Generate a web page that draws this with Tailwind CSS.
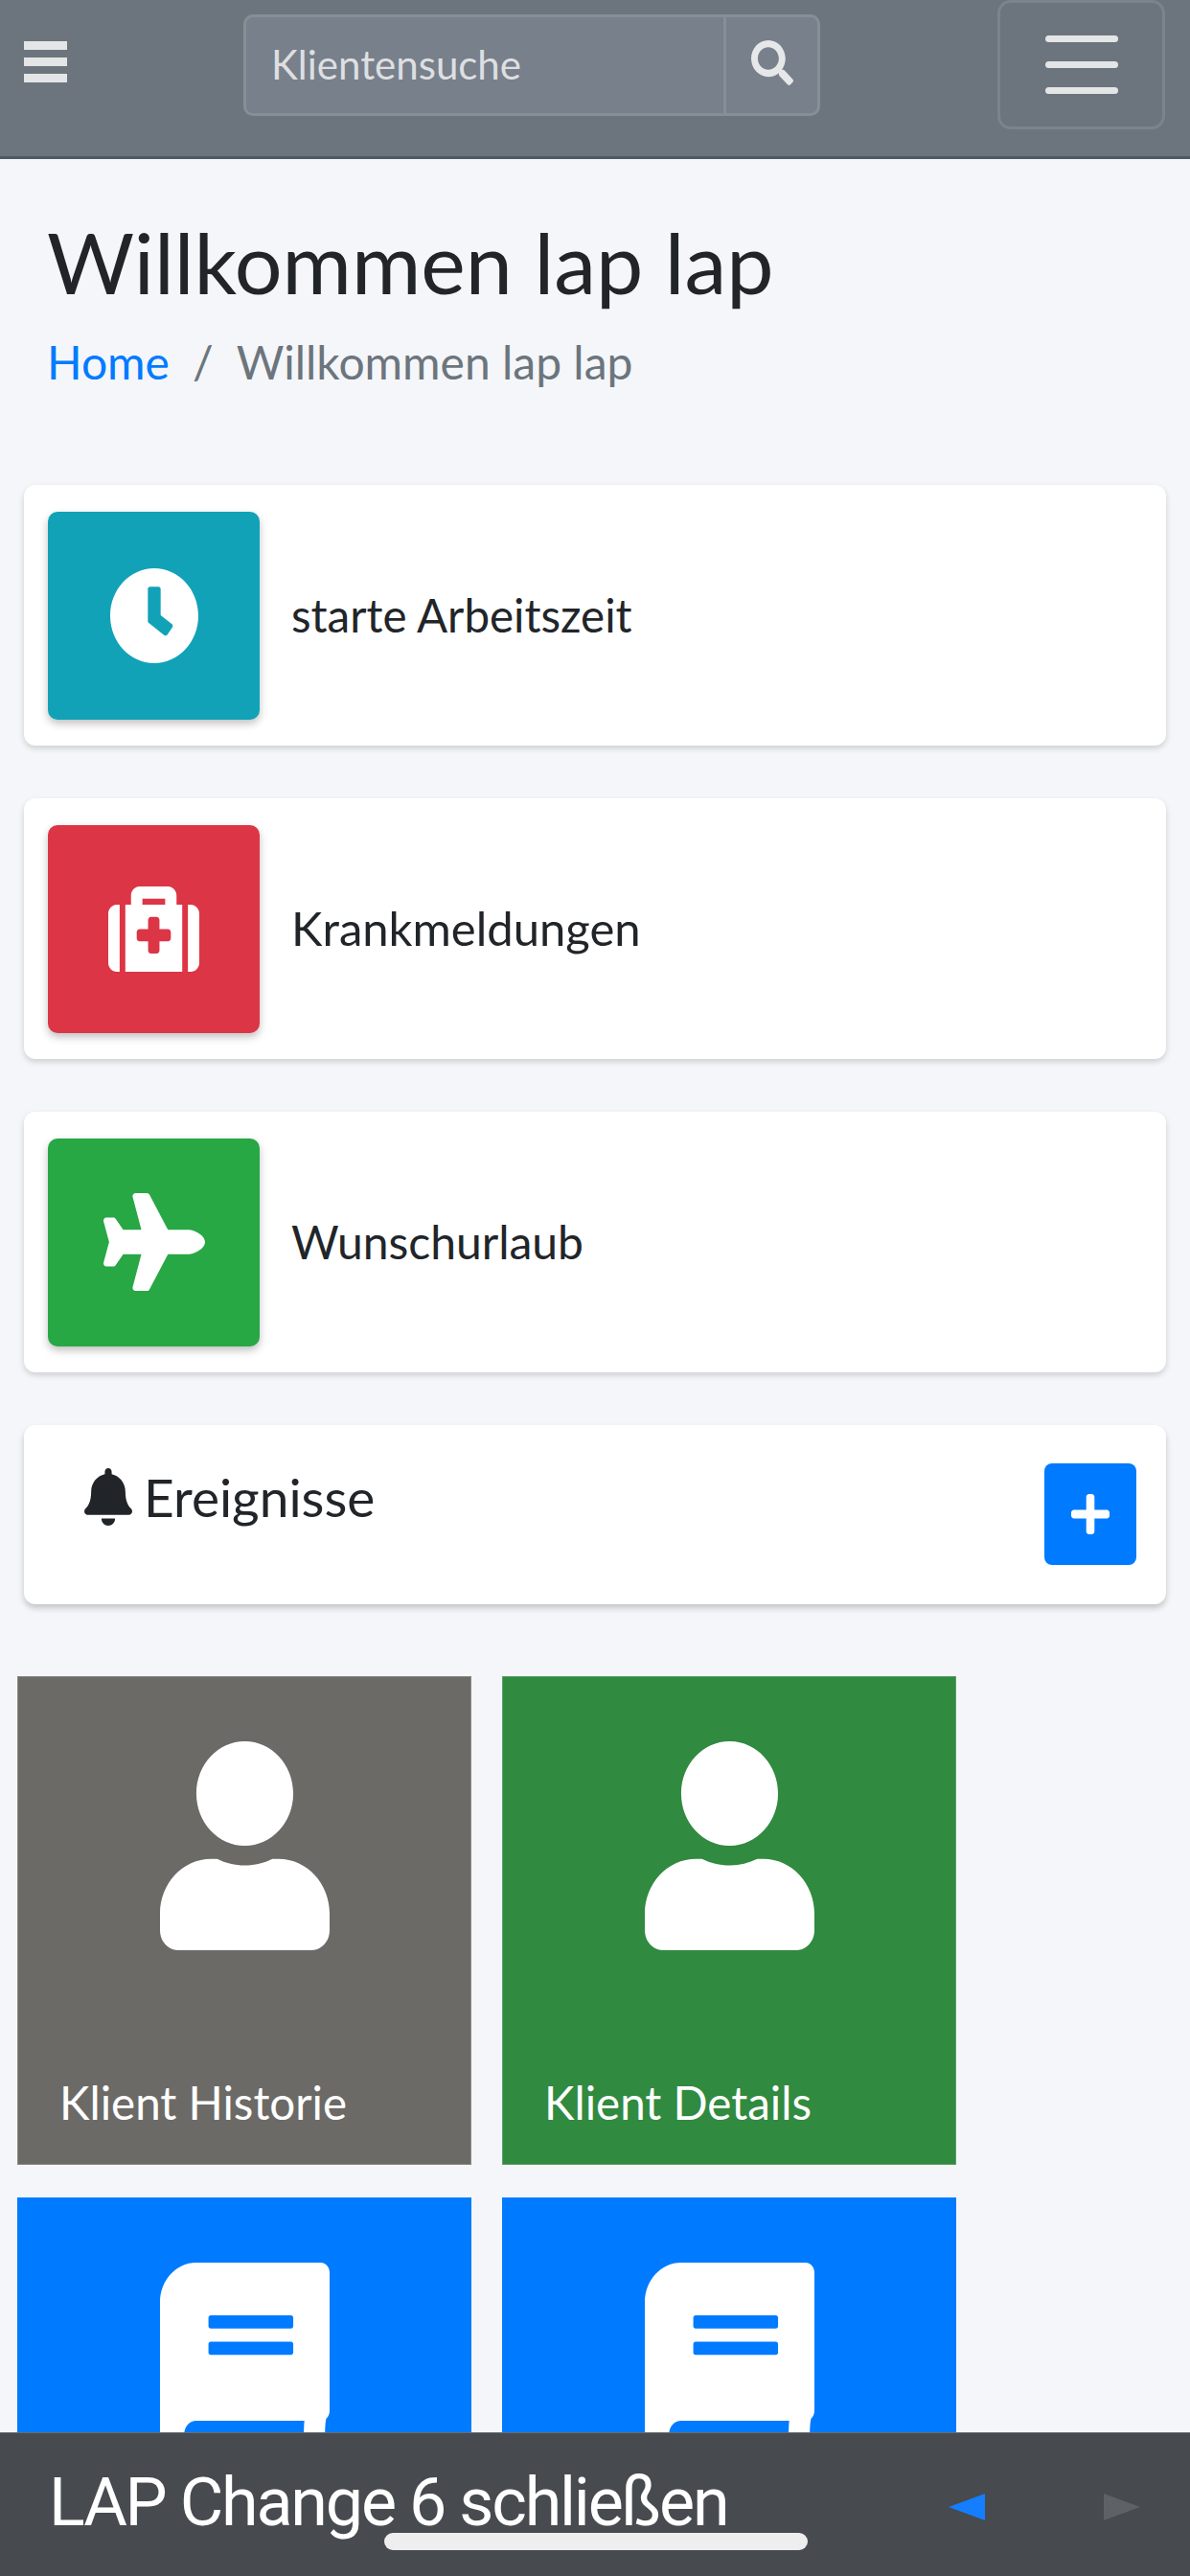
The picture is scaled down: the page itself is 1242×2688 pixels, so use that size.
<!DOCTYPE html>
<html lang="de">
<head>
  <meta charset="UTF-8" />
  <meta name="viewport" content="width=device-width, initial-scale=1.0" />
  <title>Willkommen lap lap</title>
  <script src="https://cdn.jsdelivr.net/npm/@tailwindcss/browser@4"></script>
</head>
<body class="relative h-[2688px] w-[1242px] overflow-hidden bg-[#f4f6f9] font-['Lato',sans-serif] text-[#212529]">

  <!-- top navbar -->
  <header class="flex h-[166px] items-start border-b-[3px] border-[#4f5962] bg-[#6c757d]">
    <div class="ml-[25px] mt-[43px] flex w-[45px] flex-col gap-[8px]">
      <div class="h-[9px] bg-[#e4e5e6]"></div>
      <div class="h-[9px] bg-[#e4e5e6]"></div>
      <div class="h-[9px] bg-[#e4e5e6]"></div>
    </div>
    <div class="ml-[184px] mt-[15px] flex h-[106px] w-[602px] rounded-[10px] border-[3px] border-[#868e96] bg-[#78808b]">
      <div class="flex flex-1 items-center pl-[26px] pb-[2px] text-[42px] text-white/75">Klientensuche</div>
      <div class="flex w-[98px] items-start justify-center border-l-[3px] border-[#868e96] pt-[24px]">
        <svg class="h-[47px] w-[44px] fill-[#e6e7e9]" viewBox="0 0 512 512" preserveAspectRatio="none"><path d="M505 442.7L405.3 343c-4.5-4.5-10.6-7-17-7H372c27.6-35.3 44-79.7 44-128C416 93.1 322.9 0 208 0S0 93.1 0 208s93.1 208 208 208c48.3 0 92.7-16.4 128-44v16.3c0 6.4 2.5 12.5 7 17l99.7 99.7c9.4 9.4 24.6 9.4 33.9 0l28.3-28.3c9.4-9.4 9.4-24.6.1-34zM208 336c-70.7 0-128-57.2-128-128 0-70.7 57.2-128 128-128 70.7 0 128 57.2 128 128 0 70.7-57.2 128-128 128z"/></svg>
      </div>
    </div>
    <div class="ml-[185px] flex h-[135px] w-[175px] flex-col items-center gap-[20px] rounded-[14px] border-[3px] border-[#7b838c] pt-[34px]">
      <div class="h-[7px] w-[76px] rounded-full bg-[#e4e5e6]"></div>
      <div class="h-[7px] w-[76px] rounded-full bg-[#e4e5e6]"></div>
      <div class="h-[7px] w-[76px] rounded-full bg-[#e4e5e6]"></div>
    </div>
  </header>

  <!-- page title -->
  <section class="pl-[49px] pt-[54px]">
    <h1 class="text-[88px] leading-[106px]">Willkommen lap lap</h1>
    <nav class="mt-[20px] flex items-center text-[48px] leading-[64px]">
      <a class="text-[#007bff]">Home</a>
      <span class="mx-[24px] text-[#6c757d]">/</span>
      <span class="text-[#6c757d]">Willkommen lap lap</span>
    </nav>
  </section>

  <!-- info boxes -->
  <section class="mx-[25px] mt-[96px] flex flex-col gap-[55px]">
    <div class="flex h-[272px] items-center rounded-[12px] bg-white pl-[25px] shadow-[0_3px_6px_rgba(0,0,0,0.16)]">
      <div class="flex h-[217px] w-[221px] items-center justify-center rounded-[10px] bg-[#11a2b8] shadow-[0_4px_8px_rgba(0,0,0,0.25)]">
        <svg class="h-[99px] w-[92px] fill-white" viewBox="8 8 496 496" preserveAspectRatio="none"><path d="M256 8C119 8 8 119 8 256s111 248 248 248 248-111 248-248S393 8 256 8zm57.1 350.1L224.9 294c-3.1-2.3-4.9-5.9-4.9-9.7V116c0-6.6 5.4-12 12-12h48c6.6 0 12 5.4 12 12v137.7l63.5 46.2c5.4 3.9 6.5 11.4 2.6 16.8l-28.2 38.8c-3.9 5.3-11.4 6.5-16.8 2.6z"/></svg>
      </div>
      <div class="ml-[33px] text-[47.5px]">starte Arbeitszeit</div>
    </div>
    <div class="flex h-[272px] items-center rounded-[12px] bg-white pl-[25px] shadow-[0_3px_6px_rgba(0,0,0,0.16)]">
      <div class="flex h-[217px] w-[221px] items-center justify-center rounded-[10px] bg-[#dc3545] shadow-[0_4px_8px_rgba(0,0,0,0.25)]">
        <svg class="h-[89px] w-[95px] fill-white" viewBox="0 32 512 448" preserveAspectRatio="none"><path d="M96 480h320V128h-32V80c0-26.51-21.49-48-48-48H176c-26.51 0-48 21.49-48 48v48H96v352zm96-384h128v32H192V96zm320 80v256c0 26.51-21.49 48-48 48h-16V128h16c26.51 0 48 21.49 48 48zM64 480H48c-26.51 0-48-21.49-48-48V176c0-26.51 21.49-48 48-48h16v352zm288-208v32c0 8.837-7.163 16-16 16h-48v48c0 8.837-7.163 16-16 16h-32c-8.837 0-16-7.163-16-16v-48h-48c-8.837 0-16-7.163-16-16v-32c0-8.837 7.163-16 16-16h48v-48c0-8.837 7.163-16 16-16h32c8.837 0 16 7.163 16 16v48h48c8.837 0 16 7.163 16 16z"/></svg>
      </div>
      <div class="ml-[33px] text-[49px]">Krankmeldungen</div>
    </div>
    <div class="flex h-[272px] items-center rounded-[12px] bg-white pl-[25px] shadow-[0_3px_6px_rgba(0,0,0,0.16)]">
      <div class="flex h-[217px] w-[221px] items-center justify-center rounded-[10px] bg-[#28a745] shadow-[0_4px_8px_rgba(0,0,0,0.25)]">
        <svg class="h-[102px] w-[106px] fill-white" viewBox="0 0 576 512" preserveAspectRatio="none"><path d="M480 192H365.71L260.61 8.06A16.014 16.014 0 0 0 246.71 0h-65.5c-10.63 0-18.3 10.17-15.38 20.39L214.86 192H112l-43.2-57.6c-3.02-4.03-7.77-6.4-12.8-6.4H16.01C5.6 128-2.04 137.78.49 147.88L32 256 .49 364.12C-2.04 374.22 5.6 384 16.01 384H56c5.04 0 9.78-2.37 12.8-6.4L112 320h102.86l-49.03 171.6c-2.92 10.22 4.75 20.4 15.38 20.4h65.5c5.74 0 11.04-3.08 13.89-8.06L365.71 320H480c35.35 0 96-28.65 96-64s-60.65-64-96-64z"/></svg>
      </div>
      <div class="ml-[33px] text-[48px]">Wunschurlaub</div>
    </div>
  </section>

  <!-- events -->
  <section class="mx-[25px] mt-[55px] flex h-[187px] items-start rounded-[12px] bg-white pl-[63px] pr-[31px] shadow-[0_4px_6px_rgba(0,0,0,0.2)]">
    <svg class="mt-[45px] h-[60px] w-[50px] fill-[#212529]" viewBox="0 0 448 512" preserveAspectRatio="none"><path d="M224 512c35.32 0 63.97-28.65 63.97-64H160.03c0 35.35 28.65 64 63.97 64zm215.39-149.71c-19.32-20.76-55.47-51.99-55.47-154.29 0-77.7-54.48-139.9-127.94-155.16V32c0-17.67-14.32-32-31.98-32s-31.98 14.33-31.98 32v20.84C118.56 68.1 64.08 130.3 64.08 208c0 102.3-36.15 133.53-55.47 154.29-6 6.45-8.66 14.16-8.61 21.71.11 16.4 12.98 32 32.1 32h383.8c19.12 0 32-15.6 32.1-32 .05-7.55-2.61-15.27-8.61-21.71z"/></svg>
    <div class="ml-[12px] mt-[40px] flex-1 text-[55px] leading-[70px]">Ereignisse</div>
    <button class="mt-[40px] flex h-[106px] w-[96px] items-center justify-center rounded-[8px] bg-[#007bff]">
      <svg class="h-[42px] w-[40px] fill-white" viewBox="0 32 448 448" preserveAspectRatio="none"><path d="M416 208H272V64c0-17.67-14.33-32-32-32h-32c-17.67 0-32 14.33-32 32v144H32c-17.67 0-32 14.33-32 32v32c0 17.67 14.33 32 32 32h144v144c0 17.67 14.33 32 32 32h32c17.67 0 32-14.33 32-32V304h144c17.67 0 32-14.33 32-32v-32c0-17.67-14.33-32-32-32z"/></svg>
    </button>
  </section>

  <!-- tiles -->
  <section class="ml-[18px] mt-[75px] grid grid-cols-[474px_474px] gap-x-[32px] gap-y-[34px]">
    <div class="flex h-[510px] flex-col items-center border border-[#8a8985] bg-[#6b6a67] pt-[67px] text-white">
      <svg class="h-[218px] w-[177px] fill-white" viewBox="0 0 448 512" preserveAspectRatio="none"><path d="M224 256c70.7 0 128-57.3 128-128S294.7 0 224 0 96 57.3 96 128s57.3 128 128 128zm89.6 32h-16.7c-22.2 10.2-46.9 16-72.9 16s-50.6-5.8-72.9-16h-16.7C60.2 288 0 348.2 0 422.4V464c0 26.5 21.5 48 48 48h352c26.5 0 48-21.5 48-48v-41.6c0-74.2-60.2-134.4-134.4-134.4z"/></svg>
      <div class="mt-[127px] w-full pl-[43px] text-[47.5px] leading-[64px]">Klient Historie</div>
    </div>
    <div class="flex h-[510px] flex-col items-center border border-[#5aa066] bg-[#308a40] pt-[67px] text-white">
      <svg class="h-[218px] w-[177px] fill-white" viewBox="0 0 448 512" preserveAspectRatio="none"><path d="M224 256c70.7 0 128-57.3 128-128S294.7 0 224 0 96 57.3 96 128s57.3 128 128 128zm89.6 32h-16.7c-22.2 10.2-46.9 16-72.9 16s-50.6-5.8-72.9-16h-16.7C60.2 288 0 348.2 0 422.4V464c0 26.5 21.5 48 48 48h352c26.5 0 48-21.5 48-48v-41.6c0-74.2-60.2-134.4-134.4-134.4z"/></svg>
      <div class="mt-[127px] w-full pl-[43px] text-[47.5px] leading-[64px]">Klient Details</div>
    </div>
    <div class="flex h-[510px] flex-col items-center bg-[#007bff] pt-[68px]">
      <svg class="h-[220px] w-[177px] fill-white" viewBox="0 0 448 512" preserveAspectRatio="none"><path d="M448 360V24c0-13.3-10.7-24-24-24H96C43 0 0 43 0 96v320c0 53 43 96 96 96h328c13.3 0 24-10.7 24-24v-16c0-7.5-3.5-14.3-8.9-18.7-4.2-15.4-4.2-59.3 0-74.7 5.4-4.3 8.9-11.1 8.9-18.6zM128 134c0-3.3 2.7-6 6-6h212c3.3 0 6 2.7 6 6v20c0 3.3-2.7 6-6 6H134c-3.3 0-6-2.7-6-6v-20zm0 64c0-3.3 2.7-6 6-6h212c3.3 0 6 2.7 6 6v20c0 3.3-2.7 6-6 6H134c-3.3 0-6-2.7-6-6v-20zm253.4 250H96c-17.7 0-32-14.3-32-32 0-17.6 14.4-32 32-32h285.4c-1.9 17.1-1.9 46.9 0 64z"/></svg>
    </div>
    <div class="flex h-[510px] flex-col items-center bg-[#007bff] pt-[68px]">
      <svg class="h-[220px] w-[177px] fill-white" viewBox="0 0 448 512" preserveAspectRatio="none"><path d="M448 360V24c0-13.3-10.7-24-24-24H96C43 0 0 43 0 96v320c0 53 43 96 96 96h328c13.3 0 24-10.7 24-24v-16c0-7.5-3.5-14.3-8.9-18.7-4.2-15.4-4.2-59.3 0-74.7 5.4-4.3 8.9-11.1 8.9-18.6zM128 134c0-3.3 2.7-6 6-6h212c3.3 0 6 2.7 6 6v20c0 3.3-2.7 6-6 6H134c-3.3 0-6-2.7-6-6v-20zm0 64c0-3.3 2.7-6 6-6h212c3.3 0 6 2.7 6 6v20c0 3.3-2.7 6-6 6H134c-3.3 0-6-2.7-6-6v-20zm253.4 250H96c-17.7 0-32-14.3-32-32 0-17.6 14.4-32 32-32h285.4c-1.9 17.1-1.9 46.9 0 64z"/></svg>
    </div>
  </section>

  <!-- bottom bar over the page -->
  <footer class="absolute inset-x-0 bottom-0 flex h-[150px] items-start border-t border-[#6a6d71] bg-[#474a4f] font-['Roboto',sans-serif]">
    <div class="ml-[51px] mt-[32px] flex-1 text-[70px] leading-[80px] tracking-[-2.2px] text-white">LAP Change 6 schließen</div>
    <div class="mr-[52px] mt-[63px] flex gap-[124px]">
      <div class="h-0 w-0 border-y-[14px] border-r-[38px] border-y-transparent border-r-[#147eff]"></div>
      <div class="h-0 w-0 border-y-[14px] border-l-[38px] border-y-transparent border-l-[#5e6166]"></div>
    </div>
    <div class="absolute bottom-[27px] left-[401px] h-[18px] w-[442px] rounded-full bg-[#eeeeef]"></div>
  </footer>
</body>
</html>
